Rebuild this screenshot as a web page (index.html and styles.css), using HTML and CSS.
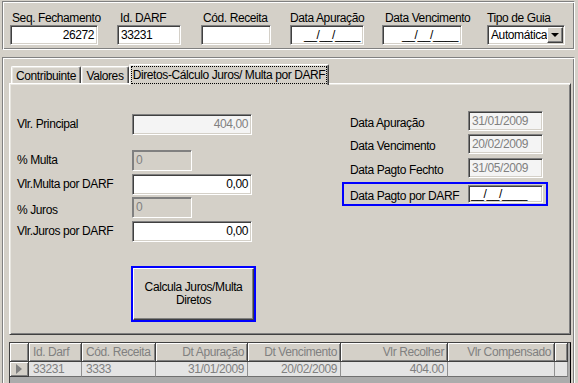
FILE: index.html
```html
<!DOCTYPE html>
<html lang="pt-BR">

<head>
  <meta charset="UTF-8">
  <title>Cálculo Juros/Multa por DARF</title>
  <link rel="stylesheet" href="styles.css">
</head>

<body>

  <!-- Cabeçalho do fechamento -->
  <div class="top-panel">
    <div class="field f-seq">
      <label>Seq. Fechamento</label>
      <div class="edit right">26272</div>
    </div>
    <div class="field f-darf">
      <label class="pad3">Id. DARF</label>
      <div class="edit">33231</div>
    </div>
    <div class="field f-rec">
      <label>Cód. Receita</label>
      <div class="edit"></div>
    </div>
    <div class="field f-apur">
      <label class="pad0">Data Apuração</label>
      <div class="edit right">__/__/____</div>
    </div>
    <div class="field f-venc">
      <label class="pad3">Data Vencimento</label>
      <div class="edit right">__/__/____</div>
    </div>
    <div class="field f-tipo">
      <label class="pad0">Tipo de Guia</label>
      <div class="edit combo">
        <span>Automática</span>
        <span class="combo-btn"><i class="arrow-down"></i></span>
      </div>
    </div>
  </div>

  <div class="main-panel">
    <div class="tabs">
      <div class="tab t-contrib">Contribuinte</div>
      <div class="tab t-valores">Valores</div>
      <div class="tab active"><span class="focus">Diretos-Cálculo Juros/ Multa por DARF</span></div>
    </div>

    <div class="tab-page">
      <div class="col-left">
        <div class="row r1">
          <span class="lbl">Vlr. Principal</span>
          <div class="edit wide right readonly">404,00</div>
        </div>
        <div class="row r2">
          <span class="lbl">% Multa</span>
          <div class="edit narrow disabled">0</div>
        </div>
        <div class="row r3">
          <span class="lbl">Vlr.Multa por DARF</span>
          <div class="edit wide right">0,00</div>
        </div>
        <div class="row r4">
          <span class="lbl lower">% Juros</span>
          <div class="edit narrow disabled">0</div>
        </div>
        <div class="row r5">
          <span class="lbl">Vlr.Juros por DARF</span>
          <div class="edit wide right">0,00</div>
        </div>
        <div class="btn-focus">
          <div class="button">Calcula Juros/Multa<br>Diretos</div>
        </div>
      </div>

      <div class="col-right">
        <div class="row d1">
          <span class="lbl">Data Apuração</span>
          <div class="edit date readonly">31/01/2009</div>
        </div>
        <div class="row d2">
          <span class="lbl">Data Vencimento</span>
          <div class="edit date readonly">20/02/2009</div>
        </div>
        <div class="row d3">
          <span class="lbl">Data Pagto Fechto</span>
          <div class="edit date readonly">31/05/2009</div>
        </div>
        <div class="row highlight">
          <span class="lbl">Data Pagto por DARF</span>
          <div class="edit date">__/__/____</div>
        </div>
      </div>
    </div>

    <!-- Grade de DARFs -->
    <div class="grid">
      <div class="hcell ind"></div>
      <div class="hcell">Id. Darf</div>
      <div class="hcell">Cód. Receita</div>
      <div class="hcell right">Dt Apuração</div>
      <div class="hcell right">Dt Vencimento</div>
      <div class="hcell right">Vlr Recolher</div>
      <div class="hcell right">Vlr Compensado</div>
      <div class="hcell"></div>

      <div class="hcell ind"><i class="arrow-right"></i></div>
      <div class="cell">33231</div>
      <div class="cell">3333</div>
      <div class="cell right">31/01/2009</div>
      <div class="cell right">20/02/2009</div>
      <div class="cell right">404.00</div>
      <div class="cell right"></div>
      <div class="cell"></div>
    </div>
  </div>

</body>

</html>
```

FILE: styles.css
```css
/* Base */
body {
  margin: 0;
  background: #d4d0c8;
  font-family: "Liberation Sans", Arial, sans-serif;
  font-size: 12px;
  letter-spacing: -0.4px;
  line-height: 15px;
  color: #000;
  overflow: hidden;
  height: 383px;
}

.right {
  text-align: right;
}

/* Painel superior (etched) */
.top-panel {
  box-sizing: border-box;
  height: 49px;
  margin: 1px 3px 0 2px;
  border: 1px solid;
  border-color: #808080 #fff #fff #808080;
  box-shadow: inset 1px 1px #fff, inset -1px -1px #808080;
  padding: 9px 0 0 7px;
  display: flex;
}

.field {
  display: flex;
  flex-direction: column;
}

.field label {
  padding-left: 2px;
  height: 14px;
  white-space: nowrap;
}

.field label.pad3 {
  padding-left: 3px;
}

.field label.pad0 {
  padding-left: 0;
}

.f-seq { width: 88px; }
.f-darf { width: 64px; margin-left: 19px; }
.f-rec { width: 70px; margin-left: 20px; }
.f-apur { width: 74px; margin-left: 19px; }
.f-venc { width: 80px; margin-left: 18px; }
.f-tipo { width: 78px; margin-left: 25px; }

/* Campos de edição (sunken) */
.edit {
  box-sizing: border-box;
  height: 20px;
  border: 1px solid;
  border-color: #808080 #fff #fff #808080;
  box-shadow: inset 1px 1px #404040, inset -1px -1px #d4d0c8;
  background: #fff;
  padding: 0 3px;
  line-height: 18px;
  white-space: nowrap;
  overflow: hidden;
}

.edit.readonly {
  background: #f4f4f4;
  color: #808080;
}

.edit.disabled {
  background: #d4d0c8;
  color: #808080;
  box-shadow: inset 1px 1px #808080, inset -1px -1px #d4d0c8;
}

.combo {
  display: flex;
  align-items: center;
  justify-content: space-between;
  padding: 0 2px 0 3px;
}

.combo-btn {
  box-sizing: border-box;
  flex: none;
  width: 16px;
  height: 16px;
  background: #d4d0c8;
  border: 1px solid;
  border-color: #fff #404040 #404040 #fff;
  box-shadow: inset -1px -1px #808080;
  display: flex;
  align-items: center;
  justify-content: center;
}

.arrow-down {
  width: 0;
  height: 0;
  border-top: 4px solid #000;
  border-left: 4px solid transparent;
  border-right: 4px solid transparent;
}

/* Painel principal com abas */
.main-panel {
  box-sizing: border-box;
  height: 340px;
  margin: 7px 3px 0 2px;
  border: 1px solid;
  border-color: #808080 #fff #fff #808080;
  box-shadow: inset 1px 1px #fff, inset -1px -1px #808080;
  padding: 6px 3px 0 6px;
}

.tabs {
  display: flex;
  align-items: flex-end;
  height: 21px;
  margin: 0 0 -2px 2px;
  position: relative;
  z-index: 1;
}

.tab {
  box-sizing: border-box;
  height: 17px;
  margin-bottom: 2px;
  padding-top: 2px;
  text-align: center;
  white-space: nowrap;
  border-top: 1px solid #fff;
  border-left: 1px solid #fff;
  border-right: 1px solid #404040;
  box-shadow: inset -1px 0 #808080, inset 1px 1px #e8e6e0;
  border-radius: 2px 2px 0 0;
}

.t-contrib { width: 70px; }
.t-valores { width: 48px; }

.tab.active {
  width: 200px;
  height: 21px;
  margin-bottom: 0;
  padding: 2px 2px 0 2px;
  background: #d4d0c8;
}

.focus {
  display: block;
  height: 15px;
  padding-top: 1px;
  outline: 1px dotted #000;
}

.tab-page {
  box-sizing: border-box;
  height: 252px;
  border: 1px solid;
  border-color: #fff #404040 #404040 #fff;
  box-shadow: inset 1px 1px #e8e6e0, inset -1px -1px #808080;
  display: flex;
}

.row {
  display: flex;
  align-items: center;
  white-space: nowrap;
}

.col-left {
  box-sizing: border-box;
  width: 332px;
  padding: 30px 0 0 7px;
}

.col-left .lbl {
  width: 115px;
}

.col-left .row {
  height: 21px;
}

.col-left .edit {
  height: 21px;
  line-height: 19px;
}

.wide { width: 120px; }
.narrow { width: 60px; }

.r2 { margin-top: 15px; }
.r3 { margin-top: 3px; }
.r4 { margin-top: 2px; }
.r5 { margin-top: 3px; }

.lbl.lower {
  padding-top: 6px;
}

.btn-focus {
  box-sizing: border-box;
  width: 125px;
  height: 56px;
  margin: 24px 0 0 114px;
  border: 2px solid #0000ff;
}

.button {
  box-sizing: border-box;
  height: 52px;
  padding-top: 12px;
  text-align: center;
  line-height: 13px;
  background: #d4d0c8;
  border: 1px solid;
  border-color: #fff #404040 #404040 #fff;
  box-shadow: inset -1px -1px #808080;
}

.col-right {
  padding-top: 27px;
}

.col-right .row {
  height: 20px;
  padding-left: 8px;
  width: 206px;
  box-sizing: border-box;
}

.col-right .lbl {
  width: 118px;
  padding-top: 4px;
}

.date {
  width: 75px;
}

.d2 { margin-top: 3px; }
.d3 { margin-top: 4px; }

.col-right .row.highlight {
  height: 24px;
  margin-top: 4px;
  padding-left: 6px;
  border: 2px solid #0000ff;
}

.highlight .edit {
  height: 18px;
  line-height: 16px;
  padding-left: 2px;
}

/* Grade */
.grid {
  box-sizing: border-box;
  height: 60px;
  margin-top: 7px;
  border: 1px solid;
  border-color: #404040 #000 #000 #404040;
  background: #acacac;
  display: grid;
  grid-template-columns: 19px 53px 74px 92px 93px 107px 107px 13px;
  grid-template-rows: 19px 15px;
  align-content: start;
  color: #808080;
}

.hcell {
  box-sizing: border-box;
  background: #d4d0c8;
  border-right: 1px solid #404040;
  border-bottom: 1px solid #404040;
  box-shadow: inset 1px 1px #fff, inset -1px -1px #808080;
  padding: 2px 3px 0 4px;
  white-space: nowrap;
  overflow: hidden;
}

.hcell.ind {
  display: flex;
  align-items: center;
  justify-content: center;
  padding: 0;
}

.cell {
  box-sizing: border-box;
  background: #e4e4e4;
  border-right: 1px solid #909090;
  border-bottom: 1px solid #707070;
  padding: 0 3px 0 4px;
  line-height: 14px;
  white-space: nowrap;
  overflow: hidden;
}

.arrow-right {
  width: 0;
  height: 0;
  border-left: 6px solid #808080;
  border-top: 5px solid transparent;
  border-bottom: 5px solid transparent;
}
```
